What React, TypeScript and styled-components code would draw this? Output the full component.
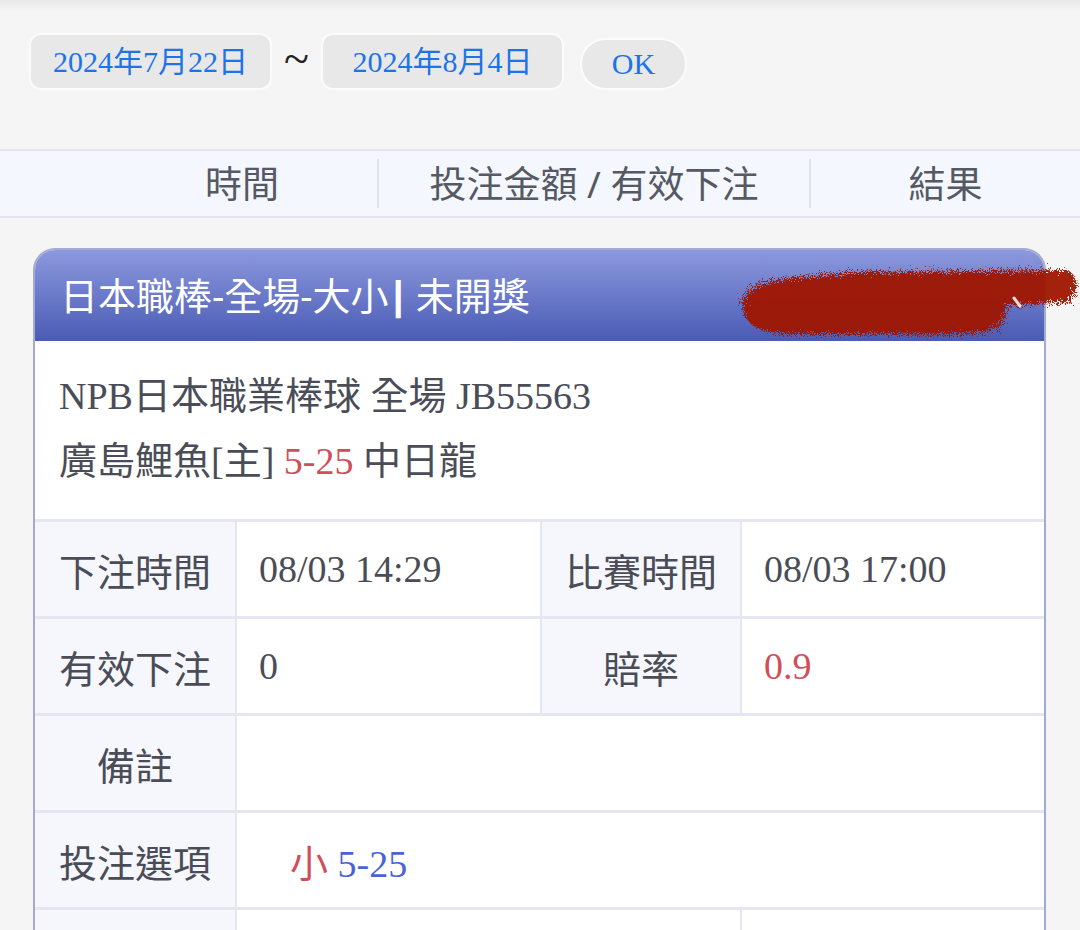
import styled, { createGlobalStyle } from 'styled-components';

const GlobalStyle = createGlobalStyle`
  html, body {
    margin: 0;
    padding: 0;
    background: #f5f5f5;
  }
  * { box-sizing: border-box; }
`;

const SERIF = `"Liberation Serif", "Noto Sans CJK TC", serif`;
const SANS = `"Noto Sans", "Noto Sans CJK TC", sans-serif`;

const Page = styled.div`
  width: 1080px;
  min-height: 930px;
  background: linear-gradient(#e9e9e9 0px, #f5f5f5 12px);
  overflow: hidden;
`;

const DateBar = styled.div`
  display: flex;
  align-items: flex-start;
  padding: 33px 0 0 29px;
  height: 149px;
`;

const DateBtn = styled.button`
  width: 243px;
  height: 57px;
  padding: 0;
  border: 2px solid #fbfbfb;
  border-radius: 12px;
  background: #e8e8e8;
  color: #1d74e6;
  font-family: ${SERIF};
  font-size: 30px;
  line-height: 53px;
  text-align: center;
  cursor: pointer;
`;

const Tilde = styled.span`
  width: 49px;
  height: 57px;
  text-align: center;
  font-family: ${SERIF};
  font-size: 46px;
  line-height: 52px;
  color: #222;
`;

const OkBtn = styled(DateBtn)`
  margin: 5px 0 0 16px;
  width: 107px;
  height: 52px;
  border-radius: 26px;
  line-height: 48px;
`;

const Tabs = styled.div`
  display: grid;
  grid-template-columns: 270px 432px 1fr;
  padding: 8px 0 8px 107px;
  background: #f4f7fd;
  border-top: 2px solid #e2e5ee;
  border-bottom: 2px solid #e2e5ee;
`;

const Tab = styled.div<{ $sep?: boolean }>`
  height: 49px;
  line-height: 49px;
  text-align: center;
  font-family: ${SANS};
  font-size: 37px;
  color: #555963;
  border-left: ${(p) => (p.$sep ? '2px solid #e0e3ec' : 'none')};
`;

const Card = styled.div`
  margin: 30px 34px 0 33px;
  border: 2px solid #a5aad0;
  border-bottom: none;
  border-radius: 22px 22px 0 0;
  background: #fff;
`;

const CardHead = styled.div`
  position: relative;
  height: 91px;
  padding-left: 25px;
  border-radius: 20px 20px 0 0;
  background: linear-gradient(#8c99de, #4a5bb4);
  color: #fff;
  font-family: ${SANS};
  font-size: 38px;
  line-height: 91px;
  white-space: nowrap;
`;

const Bar = styled.b`
  font-weight: 900;
  margin-right: 8px;
`;

const Scribble = styled.svg`
  position: absolute;
  left: 700px;
  top: 10px;
`;

const Info = styled.div`
  padding: 23px 24px 25px;
  font-family: ${SERIF};
  font-size: 38px;
  line-height: 65px;
  color: #4a4d57;
`;

const Red = styled.span`
  color: #d24d5a;
`;

const Blue = styled.span`
  color: #4a62d8;
`;

const Table = styled.div`
  display: grid;
  grid-template-columns: 200px 303px 198px 1fr;
  grid-auto-rows: 94px;
  column-gap: 2px;
  row-gap: 3px;
  padding-top: 3px;
  background: #e4e6f2;
`;

const Label = styled.div`
  display: flex;
  align-items: center;
  justify-content: center;
  background: #f6f7fc;
  font-family: ${SANS};
  font-size: 38px;
  color: #4a4d57;
`;

const Value = styled.div<{ $span?: number; $indent?: number }>`
  display: flex;
  align-items: center;
  grid-column: span ${(p) => p.$span ?? 1};
  padding-left: ${(p) => p.$indent ?? 22}px;
  background: #fff;
  font-family: ${SERIF};
  font-size: 38px;
  color: #4a4d57;
  white-space: pre;
`;

const App = () => {
  return (
    <>
      <GlobalStyle />
      <Page>
        <DateBar>
          <DateBtn>2024年7月22日</DateBtn>
          <Tilde>~</Tilde>
          <DateBtn>2024年8月4日</DateBtn>
          <OkBtn>OK</OkBtn>
        </DateBar>

        <Tabs>
          <Tab>時間</Tab>
          <Tab $sep>投注金額 / 有效下注</Tab>
          <Tab $sep>結果</Tab>
        </Tabs>

        <Card>
          <CardHead>
            日本職棒-全場-大小<Bar>|</Bar>未開獎
            <Scribble width="350" height="84" viewBox="0 0 350 84">
              <defs>
                <filter id="fuzz" x="-10%" y="-30%" width="120%" height="160%">
                  <feTurbulence type="fractalNoise" baseFrequency="1.1" numOctaves="3" seed="4" result="n" />
                  <feDisplacementMap in="SourceGraphic" in2="n" scale="18" />
                </filter>
              </defs>
              <g filter="url(#fuzz)" fill="#a01806" opacity="0.95">
                <path d="M8 48 C6 32 20 24 40 20 L120 12 L332 10 C344 14 344 36 332 42 L272 46 L268 62 C262 74 220 76 160 74 L60 74 C24 74 8 64 8 48 Z" />
              </g>
              <path d="M279 38 L285 46" stroke="#fff" strokeWidth="3" strokeLinecap="round" opacity="0.85" />
            </Scribble>
          </CardHead>

          <Info>
            <div>NPB日本職業棒球 全場 JB55563</div>
            <div>
              廣島鯉魚[主] <Red>5-25</Red> 中日龍
            </div>
          </Info>

          <Table>
            <Label>下注時間</Label>
            <Value>08/03 14:29</Value>
            <Label>比賽時間</Label>
            <Value>08/03 17:00</Value>

            <Label>有效下注</Label>
            <Value>0</Value>
            <Label>賠率</Label>
            <Value>
              <Red>0.9</Red>
            </Value>

            <Label>備註</Label>
            <Value $span={3} />

            <Label>投注選項</Label>
            <Value $span={3} $indent={53}>
              <span>
                <Red>小</Red> <Blue>5-25</Blue>
              </span>
            </Value>

            <Label />
            <Value $span={2} />
            <Value />
          </Table>
        </Card>
      </Page>
    </>
  );
};

export default App;
